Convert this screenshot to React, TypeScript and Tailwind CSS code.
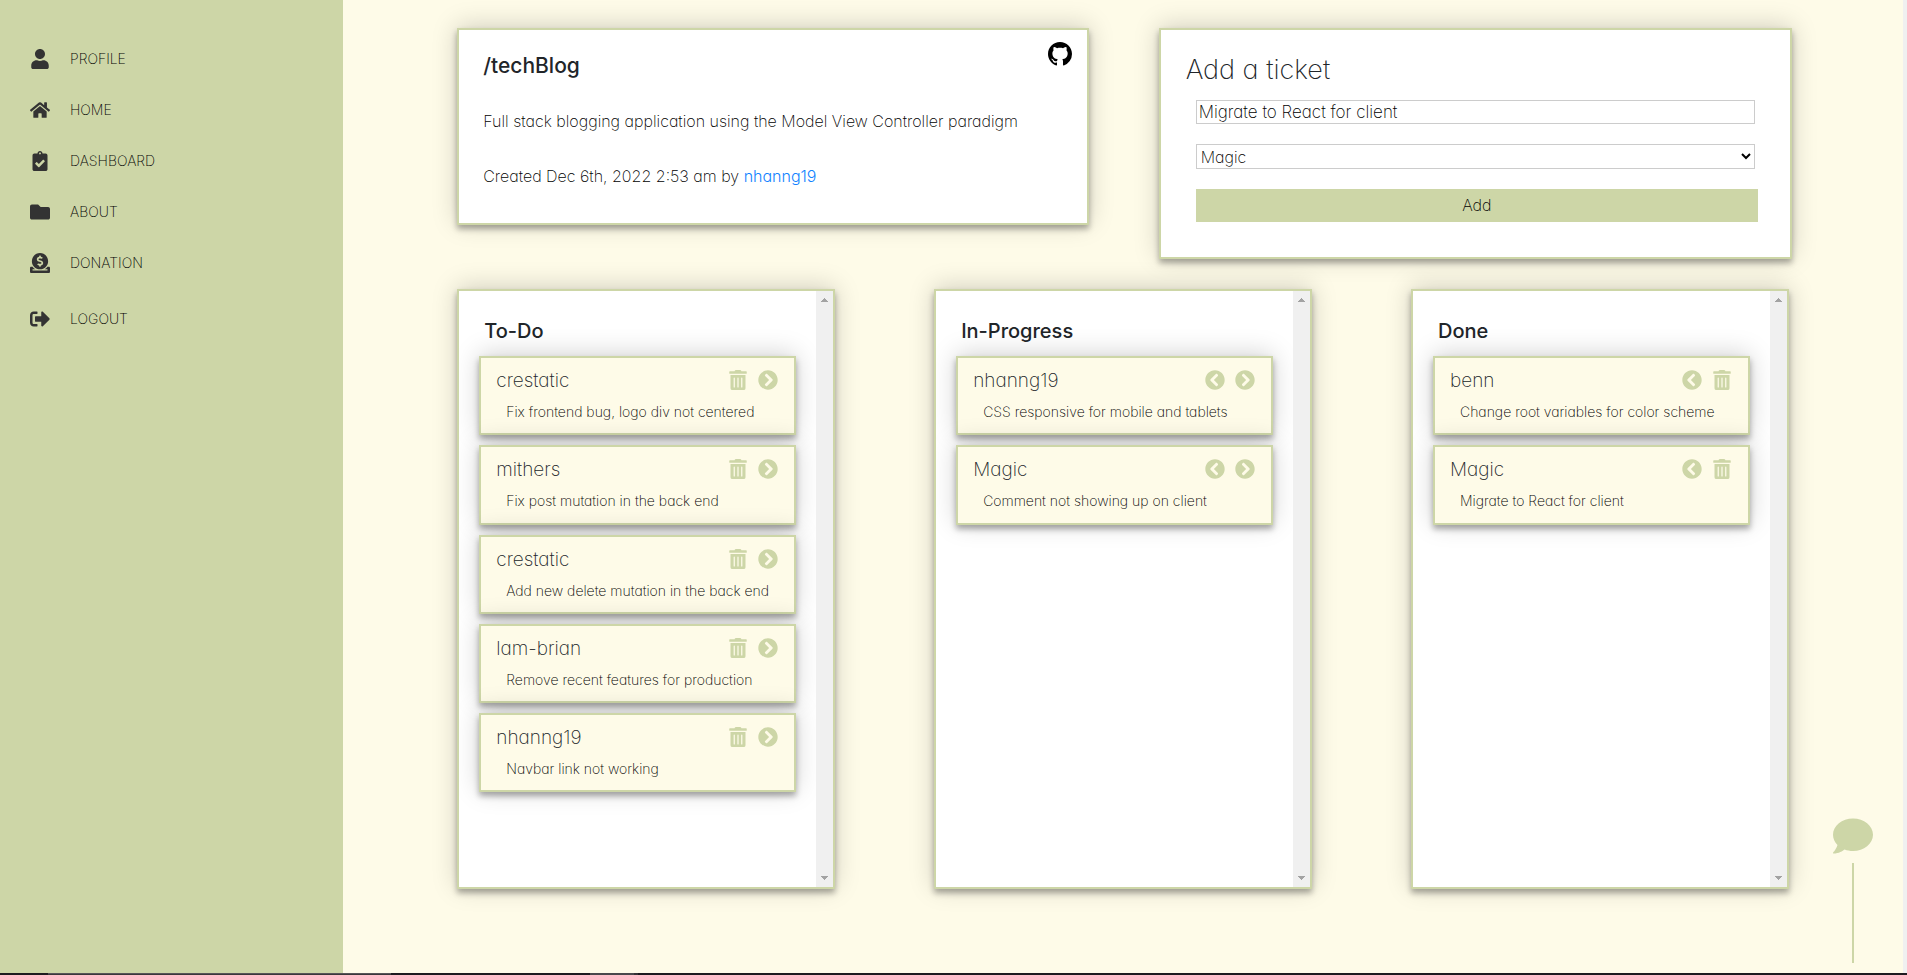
import { useState } from "react";
import type { FormEvent, ReactNode } from "react";
import {
  FaChevronCircleLeft,
  FaChevronCircleRight,
  FaClipboardCheck,
  FaComment,
  FaDonate,
  FaFolder,
  FaHome,
  FaSignOutAlt,
  FaTrashAlt,
  FaUser,
} from "react-icons/fa";

type Status = "todo" | "progress" | "done";

interface Ticket {
  id: number;
  user: string;
  text: string;
  status: Status;
}

const initialTickets: Ticket[] = [
  { id: 1, user: "crestatic", text: "Fix frontend bug, logo div not centered", status: "todo" },
  { id: 2, user: "mithers", text: "Fix post mutation in the back end", status: "todo" },
  { id: 3, user: "crestatic", text: "Add new delete mutation in the back end", status: "todo" },
  { id: 4, user: "lam-brian", text: "Remove recent features for production", status: "todo" },
  { id: 5, user: "nhanng19", text: "Navbar link not working", status: "todo" },
  { id: 6, user: "nhanng19", text: "CSS responsive for mobile and tablets", status: "progress" },
  { id: 7, user: "Magic", text: "Comment not showing up on client", status: "progress" },
  { id: 8, user: "benn", text: "Change root variables for color scheme", status: "done" },
  { id: 9, user: "Magic", text: "Migrate to React for client", status: "done" },
];

const columns: { status: Status; title: string }[] = [
  { status: "todo", title: "To-Do" },
  { status: "progress", title: "In-Progress" },
  { status: "done", title: "Done" },
];

const members = ["Magic", "benn", "crestatic", "lam-brian", "mithers", "nhanng19"];

const shadow = "shadow-[0_4px_6px_rgba(0,0,0,0.32),0_-2px_24px_rgba(0,0,0,0.18)]";

function GithubMark() {
  return (
    <svg width="24" height="24" viewBox="0 0 16 16" fill="currentColor" aria-hidden="true">
      <path
        fillRule="evenodd"
        d="M8 0C3.58 0 0 3.58 0 8c0 3.54 2.29 6.53 5.47 7.59.4.07.55-.17.55-.38 0-.19-.01-.82-.01-1.49-2.01.37-2.53-.49-2.69-.94-.09-.23-.48-.94-.82-1.13-.28-.15-.68-.52-.01-.53.63-.01 1.08.58 1.23.82.72 1.21 1.87.87 2.33.66.07-.52.28-.87.51-1.07-1.78-.2-3.64-.89-3.64-3.95 0-.87.31-1.59.82-2.15-.08-.2-.36-1.02.08-2.12 0 0 .67-.21 2.2.82.64-.18 1.32-.27 2-.27.68 0 1.36.09 2 .27 1.53-1.04 2.2-.82 2.2-.82.44 1.1.16 1.92.08 2.12.51.56.82 1.27.82 2.15 0 3.07-1.87 3.75-3.65 3.95.29.25.54.73.54 1.48 0 1.07-.01 1.93-.01 2.2 0 .21.15.46.55.38A8.013 8.013 0 0 0 16 8c0-4.42-3.58-8-8-8z"
      />
    </svg>
  );
}

function NavItem({ icon, label }: { icon: ReactNode; label: string }) {
  return (
    <li>
      <a href="#" className="flex items-center gap-5 text-sm leading-5 font-extralight text-black uppercase">
        <span className="flex size-5 justify-center text-xl text-[#333333]">{icon}</span>
        {label}
      </a>
    </li>
  );
}

function Sidebar() {
  return (
    <nav className="w-[18%] shrink-0 bg-[#cdd6a7] pt-[49px] pl-[30px]">
      <ul className="flex flex-col gap-[31px]">
        <NavItem icon={<FaUser />} label="Profile" />
        <NavItem icon={<FaHome />} label="Home" />
        <NavItem icon={<FaClipboardCheck />} label="Dashboard" />
        <NavItem icon={<FaFolder />} label="About" />
        <NavItem icon={<FaDonate />} label="Donation" />
      </ul>
      <ul className="pt-9">
        <NavItem icon={<FaSignOutAlt />} label="Logout" />
      </ul>
    </nav>
  );
}

function IconButton({ label, onClick, children }: { label: string; onClick: () => void; children: ReactNode }) {
  return (
    <button
      type="button"
      aria-label={label}
      onClick={onClick}
      className="flex size-5 cursor-pointer items-center justify-center text-xl text-[#cdd6a7]"
    >
      {children}
    </button>
  );
}

function TicketCard({
  ticket,
  onMove,
  onDelete,
}: {
  ticket: Ticket;
  onMove: (status: Status) => void;
  onDelete: () => void;
}) {
  return (
    <li className={`border-2 border-[#cdd6a7] bg-[#fefbe8] py-3 pr-4 pl-[15px] ${shadow}`}>
      <div className="flex h-6 items-start justify-between">
        <h3 className="text-[19px] leading-[22px] font-extralight text-[#212529]">{ticket.user}</h3>
        <div className="flex gap-2.5">
          {ticket.status !== "todo" && (
            <IconButton label="Move back" onClick={() => onMove(ticket.status === "done" ? "progress" : "todo")}>
              <FaChevronCircleLeft />
            </IconButton>
          )}
          {ticket.status !== "progress" && (
            <IconButton label="Delete" onClick={onDelete}>
              <FaTrashAlt />
            </IconButton>
          )}
          {ticket.status !== "done" && (
            <IconButton label="Move forward" onClick={() => onMove(ticket.status === "todo" ? "progress" : "done")}>
              <FaChevronCircleRight />
            </IconButton>
          )}
        </div>
      </div>
      <p className="pt-2 pl-2.5 text-sm leading-snug font-extralight whitespace-nowrap text-black">
        {ticket.text}
      </p>
    </li>
  );
}

function ScrollTrack() {
  return (
    <div aria-hidden="true" className="flex w-[17px] shrink-0 flex-col items-center justify-between bg-[#f0f0f0] py-[7px]">
      <svg width="7" height="4" viewBox="0 0 7 4" fill="#a3a3a3" shapeRendering="crispEdges">
        <path d="M3 0h1v1h1v1h1v1h1v1H0V3h1V2h1V1h1z" />
      </svg>
      <svg width="7" height="4" viewBox="0 0 7 4" fill="#a3a3a3" shapeRendering="crispEdges">
        <path d="M0 0h7v1H6v1H5v1H4v1H3V3H2V2H1V1H0z" />
      </svg>
    </div>
  );
}

export default function App() {
  const [tickets, setTickets] = useState(initialTickets);
  const [text, setText] = useState("Migrate to React for client");
  const [user, setUser] = useState("Magic");

  const addTicket = (event: FormEvent) => {
    event.preventDefault();
    if (!text.trim()) return;
    setTickets((list) => [...list, { id: Date.now(), user, text, status: "todo" }]);
    setText("");
  };

  return (
    <div className="flex min-h-screen flex-col bg-[#fefbe8] font-['Inter',sans-serif] [font-feature-settings:'cv11']">
      <div className="flex flex-1">
        <Sidebar />
        <main className="min-w-0 flex-1 pt-7 pb-[84px]">
          <div className="flex items-start gap-[70px] pr-[111px] pl-[114px]">
            <section className={`flex-1 border-2 border-[#cdd6a7] bg-white px-6 pt-5 pb-[35px] ${shadow}`}>
              <div className="flex items-start justify-between">
                <h1 className="text-[21px] leading-8 font-medium text-[#212529]">/techBlog</h1>
                <a href="#" aria-label="GitHub repository" className="-mt-2 -mr-[9px] text-black">
                  <GithubMark />
                </a>
              </div>
              <p className="pt-[27px] text-base leading-6 font-extralight text-black">
                Full stack blogging application using the Model View Controller paradigm
              </p>
              <p className="pt-[31px] text-base leading-6 font-extralight text-black">
                Created Dec 6th, 2022 2:53 am by{" "}
                <a href="#" className="font-light text-[#1283ff]">
                  nhanng19
                </a>
              </p>
            </section>
            <section className={`flex-1 border-2 border-[#cdd6a7] bg-white px-[25px] pt-6 pb-[35px] ${shadow}`}>
              <h2 className="text-[27px] leading-8 font-extralight text-[#212529]">Add a ticket</h2>
              <form onSubmit={addTicket} className="flex flex-col gap-5 pt-3.5 pr-[7px] pl-2.5">
                <input
                  type="text"
                  aria-label="Ticket description"
                  value={text}
                  onChange={(event) => setText(event.target.value)}
                  className="mr-[3px] h-6 rounded-none border border-[#cccccc] bg-white px-0.5 text-[17px] leading-5 font-extralight text-black"
                />
                <select
                  aria-label="Assignee"
                  value={user}
                  onChange={(event) => setUser(event.target.value)}
                  className="mr-[3px] h-[25px] rounded-none border border-[#cccccc] bg-white text-base leading-5 font-extralight text-black"
                >
                  {members.map((member) => (
                    <option key={member}>{member}</option>
                  ))}
                </select>
                <button
                  type="submit"
                  className="h-[33px] cursor-pointer bg-[#cdd6a7] pb-0.5 text-base font-extralight text-black"
                >
                  Add
                </button>
              </form>
            </section>
          </div>
          <div className="flex justify-between px-[114px] pt-[30px]">
            {columns.map((column) => (
              <section
                key={column.status}
                className={`flex h-[600px] w-[378px] border-2 border-[#cdd6a7] bg-white ${shadow}`}
              >
                <div className="min-w-0 flex-1 overflow-hidden px-5 pt-6">
                  <h2 className="pl-[5px] text-xl leading-8 font-medium text-[#212529]">{column.title}</h2>
                  <ul className="flex flex-col gap-2.5 pt-[9px]">
                    {tickets
                      .filter((ticket) => ticket.status === column.status)
                      .map((ticket) => (
                        <TicketCard
                          key={ticket.id}
                          ticket={ticket}
                          onMove={(status) =>
                            setTickets((list) => list.map((t) => (t.id === ticket.id ? { ...t, status } : t)))
                          }
                          onDelete={() => setTickets((list) => list.filter((t) => t.id !== ticket.id))}
                        />
                      ))}
                  </ul>
                </div>
                <ScrollTrack />
              </section>
            ))}
          </div>
        </main>
        <div className="w-1 shrink-0 bg-[#f0f0f0]" />
      </div>
      <div className="flex h-0.5 bg-[#1d1b1f] pl-12">
        <div className="w-[343px] border-t border-[#575558] bg-[#3a383b]" />
        <div className="ml-[199px] w-11 bg-[#4a484c]" />
        <div className="w-1 bg-[#343236]" />
      </div>
      <div className="fixed right-[34px] bottom-3 flex flex-col items-center gap-[7px] text-[#cdd6a7]">
        <button type="button" aria-label="Open chat" className="cursor-pointer text-[40px]">
          <FaComment />
        </button>
        <div className="h-[100px] w-0.5 bg-[#cdd6a7]" />
      </div>
    </div>
  );
}
